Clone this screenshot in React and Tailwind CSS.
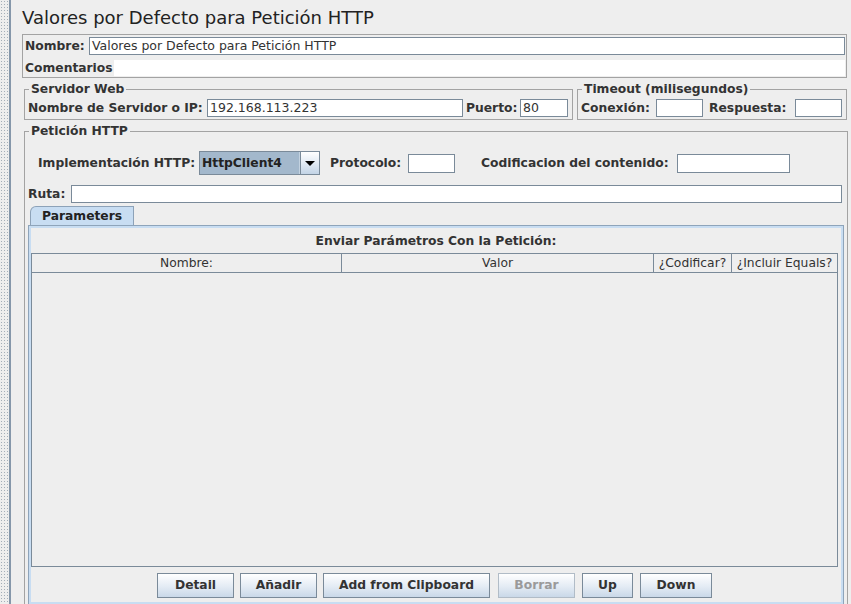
import React from "react";

const HEAD = ["Nombre:", "Valor", "¿Codificar?", "¿Incluir Equals?"];
const HEAD_W = ["w-[310px]", "w-[312px]", "w-[78px]", "flex-1"];

function Field({ className = "", children }) {
  return (
    <div
      className={`bg-white border border-[#7a8a99] flex items-center pl-[2px] text-[12.5px] leading-none whitespace-nowrap overflow-hidden ${className}`}
    >
      {children}
    </div>
  );
}

function Btn({ children, className = "", disabled }) {
  return (
    <button
      className={`h-[25px] border text-[12.3px] font-bold flex items-center justify-center bg-[linear-gradient(#ffffff,#e3ebf4_55%,#c9d8e8)] ${
        disabled ? "border-[#b1bcc7] text-[#9a9a9a]" : "border-[#7a8a99] text-[#333333]"
      } ${className}`}
    >
      {children}
    </button>
  );
}

export default function App() {
  return (
    <div className="w-[851px] h-[604px] bg-[#eeeeee] flex overflow-hidden text-[#333333] text-[12.3px] font-['DejaVu_Sans',sans-serif]">
      {/* splitter */}
      <div className="w-[8px] h-full shrink-0 bg-[radial-gradient(circle,#a4aeb8_0.7px,transparent_0.9px)] bg-[length:3px_3px]" />
      <div className="w-[1px] shrink-0" />
      <div className="w-[2px] h-full shrink-0 bg-[#8597aa]" />

      <div className="flex-1 flex flex-col pl-[11px] pr-[4px] overflow-hidden">
        {/* title */}
        <div className="h-[34px] shrink-0 pt-[7px] text-[18px] leading-[22px] text-[#222]">
          Valores por Defecto para Petición HTTP
        </div>

        {/* name + comments */}
        <div className="h-[44px] shrink-0 border border-[#a3a3a3] flex flex-col px-[1px]">
          <div className="flex items-center mt-[2px] h-[18px]">
            <span className="font-bold w-[64px] shrink-0 ml-[1px] whitespace-nowrap">Nombre:</span>
            <Field className="flex-1 h-[18px]">Valores por Defecto para Petición HTTP</Field>
          </div>
          <div className="flex items-center mt-[5px] h-[16px]">
            <span className="font-bold w-[89px] shrink-0 ml-[1px] whitespace-nowrap">Comentarios</span>
            <div className="flex-1 h-[16px] bg-white" />
          </div>
        </div>

        {/* server + timeout */}
        <div className="flex shrink-0 mt-[4px] ml-[2px] gap-[4px]">
          <fieldset className="w-[549px] border border-[#a3a3a3] pl-[3px] pr-[4px] pb-[2px]">
            <legend className="ml-[1px] px-[2px] font-bold leading-[14px]">Servidor Web</legend>
            <div className="flex items-center mt-[3px] h-[18px]">
              <span className="font-bold w-[179px] shrink-0 whitespace-nowrap">Nombre de Servidor o IP:</span>
              <Field className="flex-1 h-[18px]">192.168.113.223</Field>
              <span className="font-bold w-[57px] shrink-0 pl-[3px] whitespace-nowrap">Puerto:</span>
              <Field className="w-[48px] h-[18px]">80</Field>
            </div>
          </fieldset>
          <fieldset className="w-[270px] border border-[#a3a3a3] pl-[3px] pr-[4px] pb-[2px]">
            <legend className="ml-[1px] px-[2px] font-bold leading-[14px]">Timeout (milisegundos)</legend>
            <div className="flex items-center mt-[3px] h-[18px]">
              <span className="font-bold w-[75px] shrink-0 whitespace-nowrap">Conexión:</span>
              <Field className="w-[47px] h-[18px]" />
              <span className="font-bold w-[92px] shrink-0 pl-[6px] whitespace-nowrap">Respuesta:</span>
              <Field className="w-[47px] h-[18px]" />
            </div>
          </fieldset>
        </div>

        {/* request */}
        <fieldset className="shrink-0 mt-[4px] ml-[2px] -mr-[1px] border border-[#a3a3a3] pl-[3px] pr-[5px]">
          <legend className="ml-[1px] px-[2px] font-bold leading-[14px]">Petición HTTP</legend>

          <div className="flex items-center mt-[13px] h-[24px] pl-[10px]">
            <span className="font-bold w-[161px] shrink-0 whitespace-nowrap">Implementación HTTP:</span>
            <div className="w-[121px] h-[24px] border border-[#7a8a99] flex">
              <div className="flex-1 bg-[#a3b8cc] border-r border-[#c3d2e0] flex items-center pl-[2px] font-bold text-[#222]">
                HttpClient4
              </div>
              <div className="w-[19px] bg-[linear-gradient(#ffffff,#dfe8f2_55%,#c3d4e6)] border-l border-[#7a8a99] flex items-center justify-center">
                <div className="w-0 h-0 border-l-[5px] border-r-[5px] border-t-[5px] border-l-transparent border-r-transparent border-t-black" />
              </div>
            </div>
            <span className="font-bold w-[88px] shrink-0 pl-[10px] whitespace-nowrap">Protocolo:</span>
            <Field className="w-[47px] h-[19px]" />
            <span className="font-bold w-[222px] shrink-0 pl-[26px] whitespace-nowrap">Codificacion del contenido:</span>
            <Field className="w-[113px] h-[19px]" />
          </div>

          <div className="flex items-center mt-[10px] h-[18px]">
            <span className="font-bold w-[43px] shrink-0 whitespace-nowrap">Ruta:</span>
            <Field className="flex-1 h-[18px]" />
          </div>

          {/* tab */}
          <div className="mt-[3px] -mr-[2px] flex flex-col">
            <div className="flex pl-[2px]">
              <div className="w-[104px] h-[20px] bg-[#c8ddf2] border-t border-l border-r border-[#8da2b8] rounded-tl-[6px] flex items-center pl-[11px] font-bold text-[#222]">
                Parameters
              </div>
            </div>
            <div className="h-[380px] -mt-[1px] border border-[#8ea4ba] shadow-[inset_0_0_0_2px_#c8ddf2] px-[2px] pt-[2px] flex flex-col">
              <div className="h-[25px] flex items-center justify-center font-bold pt-[2px]">
                Enviar Parámetros Con la Petición:
              </div>
              <div className="mr-[3px] flex flex-col">
                <div className="h-[20px] flex border border-[#7a8a99]">
                  {HEAD.map((h, i) => (
                    <div
                      key={h}
                      className={`${HEAD_W[i]} flex items-center justify-center ${
                        i < 3 ? "border-r border-[#7a8a99]" : ""
                      }`}
                    >
                      {h}
                    </div>
                  ))}
                </div>
                <div className="h-[294px] border-l border-r border-b border-[#7a8a99]" />
              </div>
              <div className="flex justify-center mt-[6px] gap-[6px] pr-[3px]">
                <Btn className="w-[77px]">Detail</Btn>
                <Btn className="w-[77px]">Añadir</Btn>
                <Btn className="w-[167px] mr-[2px]">Add from Clipboard</Btn>
                <Btn className="w-[77px] mr-[1px]" disabled>Borrar</Btn>
                <Btn className="w-[51px] mr-[1px]">Up</Btn>
                <Btn className="w-[72px]">Down</Btn>
              </div>
            </div>
          </div>
        </fieldset>
      </div>
    </div>
  );
}
